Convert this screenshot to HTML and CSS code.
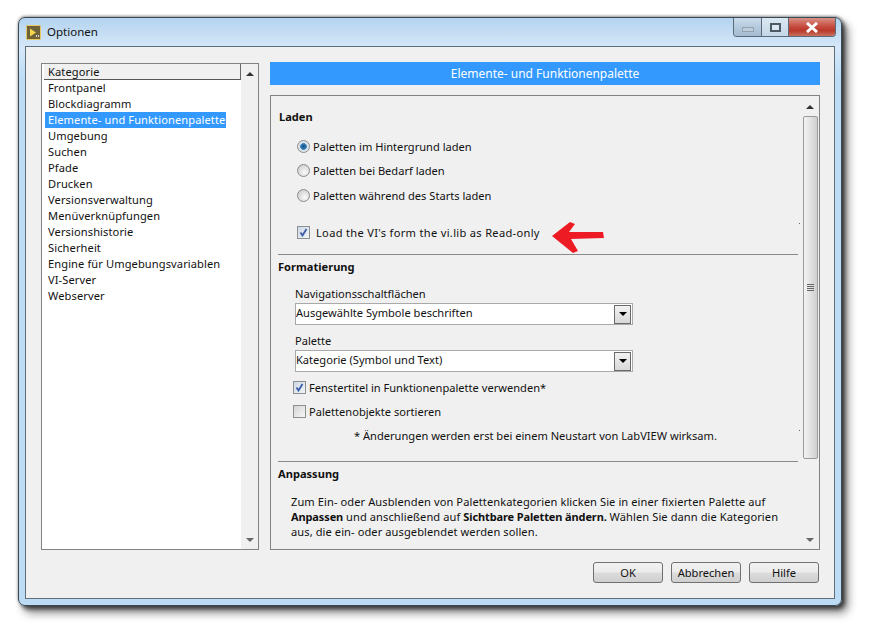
FILE: index.html
```html
<!DOCTYPE html>
<html lang="de">
<head>
<meta charset="utf-8">
<title>Optionen</title>
<link rel="stylesheet" href="styles.css">
</head>
<body>
<div class="window">
  <header class="titlebar">
    <svg class="app-icon" width="15" height="15" viewBox="0 0 15 15">
      <rect x="0.5" y="0.5" width="14" height="14" rx="1" fill="#6f6238" stroke="#e8c860"/>
      <path d="M4 3.5 L10 7.5 L4 11.5Z" fill="#f6d84e"/>
      <path d="M10 10h1v2h-1zM12 10h1v2h-1z" fill="#ddd"/>
    </svg>
    <span class="title">Optionen</span>
    <div class="controls">
      <div class="ctl ctl-min"><span class="min-glyph"></span></div>
      <div class="ctl ctl-max"><span class="max-glyph"></span></div>
      <div class="ctl ctl-close">
        <svg width="14" height="11" viewBox="0 0 14 11"><path d="M2 1 L12 10 M12 1 L2 10" stroke="#fff" stroke-width="3"/></svg>
      </div>
    </div>
  </header>
  <div class="client">
    <div class="columns">
      <aside class="listbox">
        <div class="list">
          <div class="list-head">Kategorie</div>
          <div class="list-item">Frontpanel</div>
          <div class="list-item">Blockdiagramm</div>
          <div class="list-item"><span class="selected">Elemente- und Funktionenpalette</span></div>
          <div class="list-item">Umgebung</div>
          <div class="list-item">Suchen</div>
          <div class="list-item">Pfade</div>
          <div class="list-item">Drucken</div>
          <div class="list-item">Versionsverwaltung</div>
          <div class="list-item">Menüverknüpfungen</div>
          <div class="list-item">Versionshistorie</div>
          <div class="list-item">Sicherheit</div>
          <div class="list-item">Engine für Umgebungsvariablen</div>
          <div class="list-item">VI-Server</div>
          <div class="list-item">Webserver</div>
        </div>
        <div class="scroll scroll-list">
          <span class="arrow-up"></span>
          <span class="arrow-down"></span>
        </div>
      </aside>
      <main class="main">
        <h1 class="banner">Elemente- und Funktionenpalette</h1>
        <div class="panel">
          <span class="speck speck-a"></span>
          <span class="speck speck-b"></span>
          <div class="content">
            <h2 class="sec sec-laden">Laden</h2>
            <div class="radio-row"><span class="radio on"></span>Paletten im Hintergrund laden</div>
            <div class="radio-row"><span class="radio"></span>Paletten bei Bedarf laden</div>
            <div class="radio-row"><span class="radio"></span>Paletten während des Starts laden</div>
            <div class="vi-row">
              <span class="check on"><svg width="9" height="9" viewBox="0 0 9 9"><path d="M1.5 4.5 L3.5 7.5 L7.5 1" fill="none" stroke="#3c5da8" stroke-width="1.8"/></svg></span>
              <span class="vi-label">Load the VI's form the vi.lib as Read-only</span>
              <svg class="red-arrow" width="53" height="33" viewBox="0 0 53 33"><path d="M0 15 L18 1 L23 3 L17 11 L51 11 L52 17 L19 18 L26 30 L21 32Z" fill="#ed1c24"/></svg>
            </div>
            <hr class="rule">
            <h2 class="sec">Formatierung</h2>
            <label class="field-label field-first">Navigationsschaltflächen</label>
            <div class="select"><span class="select-text">Ausgewählte Symbole beschriften</span><span class="drop"><span class="drop-tri"></span></span></div>
            <label class="field-label field-second">Palette</label>
            <div class="select"><span class="select-text">Kategorie (Symbol und Text)</span><span class="drop"><span class="drop-tri"></span></span></div>
            <div class="check-row check-first">
              <span class="check on"><svg width="9" height="9" viewBox="0 0 9 9"><path d="M1.5 4.5 L3.5 7.5 L7.5 1" fill="none" stroke="#3c5da8" stroke-width="1.8"/></svg></span>Fenstertitel in Funktionenpalette verwenden*
            </div>
            <div class="check-row"><span class="check"></span>Palettenobjekte sortieren</div>
            <p class="note">* Änderungen werden erst bei einem Neustart von LabVIEW wirksam.</p>
            <hr class="rule rule-second">
            <h2 class="sec">Anpassung</h2>
            <p class="para">Zum Ein- oder Ausblenden von Palettenkategorien klicken Sie in einer fixierten Palette auf <b>Anpassen</b> und anschließend auf <b>Sichtbare Paletten ändern.</b> Wählen Sie dann die Kategorien aus, die ein- oder ausgeblendet werden sollen.</p>
          </div>
          <div class="scroll scroll-panel">
            <span class="arrow-up"></span>
            <div class="thumb"><span class="grip"></span></div>
            <span class="arrow-down"></span>
          </div>
        </div>
        <footer class="buttons">
          <button class="btn">OK</button>
          <button class="btn">Abbrechen</button>
          <button class="btn">Hilfe</button>
        </footer>
      </main>
    </div>
  </div>
</div>
</body>
</html>
```
FILE: styles.css
```css
* { box-sizing: border-box; }
html, body { margin: 0; padding: 0; background: #fff; }
body {
  width: 871px;
  height: 628px;
  overflow: hidden;
  padding: 17px 0 0 18px;
  font-family: "Noto Sans", "DejaVu Sans", sans-serif;
  font-size: 11.1px;
  color: #111;
}
.window {
  width: 824px;
  height: 589px;
  border: 1px solid #3a4a56;
  border-radius: 7px;
  background: linear-gradient(180deg, #b4d3ef 0, #d6e8f8 30px, #bcdcf6 60px, #bcdcf6 100%);
  box-shadow: 0 -1px 3px rgba(0,0,0,.4), 3px 3px 4px rgba(0,0,0,.6), 6px 7px 10px rgba(0,0,0,.45);
  display: flex;
  flex-direction: column;
}
.titlebar {
  height: 28px;
  flex: none;
  display: flex;
  align-items: flex-start;
  padding-left: 7px;
}
.app-icon { margin-top: 7px; }
.title { margin: 6px 0 0 6px; font-size: 11.5px; line-height: 16px; color: #111; }
.controls {
  margin-left: auto;
  margin-right: 5px;
  display: flex;
  height: 19px;
  border: 1px solid #5a6a78;
  border-top: 0;
  border-radius: 0 0 4px 4px;
  overflow: hidden;
}
.ctl { display: flex; align-items: center; justify-content: center; }
.ctl-min { width: 28px; background: linear-gradient(180deg, #c9dbeb, #a3bad0); border-right: 1px solid #5a6a78; }
.ctl-max { width: 27px; background: linear-gradient(180deg, #dbe8f3, #c4d6e6); border-right: 1px solid #5a6a78; }
.ctl-close { width: 46px; background: linear-gradient(180deg, #d99287 0, #c4483a 50%, #b93a2c 70%, #c9705f 100%); }
.min-glyph { width: 12px; height: 5px; margin-top: 4px; background: #bfccd9; border: 1px solid #92a3b3; }
.max-glyph { width: 11px; height: 9px; border: 2px solid #4d5964; background: #dbe8f3; }
.client {
  margin: 0 6px 6px;
  flex: 1;
  background: #f0f0f0;
  border: 1px solid #5f6f7c;
  padding: 16px 15px 0;
}
.columns { display: flex; gap: 11px; }
.listbox {
  width: 218px;
  height: 487px;
  border: 1px solid #828282;
  background: #fff;
  display: flex;
  flex: none;
}
.list { flex: 1; padding: 0 0 0 2px; min-width: 0; letter-spacing: .1px; }
.list-head {
  height: 16px;
  line-height: 15px;
  padding-left: 4px;
  background: #f0f0f0;
  border-right: 1px solid #666;
  border-bottom: 1px solid #555;
}
.list-item { height: 16px; line-height: 16px; padding-left: 4px; }
.selected {
  display: block;
  width: 181px;
  margin-left: -3px;
  padding-left: 3px;
  background: #3399ff;
  color: #fff;
  white-space: nowrap;
}
.scroll {
  flex: none;
  width: 17px;
  background: #f0f0f0;
  display: flex;
  flex-direction: column;
  align-items: center;
  padding: 8px 0 7px;
}
.arrow-up { width: 0; height: 0; border: 4px solid transparent; border-top: 0; border-bottom: 4px solid #333; flex: none; }
.arrow-down { width: 0; height: 0; border: 4px solid transparent; border-bottom: 0; border-top: 4px solid #666; margin-top: auto; flex: none; }
.main { width: 550px; flex: none; }
.banner {
  margin: -1px 0 10px;
  height: 23px;
  background: #3399ff;
  color: #fff;
  font-weight: 400;
  font-size: 12px;
  line-height: 23px;
  text-align: center;
}
.panel {
  height: 455px;
  border: 1px solid #828282;
  display: flex;
  overflow: hidden;
  position: relative;
}
.speck { position: absolute; left: 528px; width: 1px; height: 1px; background: #666; }
.speck-a { top: 127px; }
.speck-b { top: 334px; }
.content { flex: 1; min-width: 0; padding: 13px 0 0 7px; }
.sec { margin: 0; font-size: 11.1px; font-weight: 700; line-height: 16px; }
.sec-laden { margin: 0 0 13px 1px; }
.radio-row { display: flex; align-items: center; height: 16px; margin: 0 0 8.5px 19px; white-space: nowrap; }
.radio {
  width: 13px; height: 13px;
  border-radius: 50%;
  border: 1px solid #8b8b8b;
  background: radial-gradient(circle at 62% 66%, #fafafa, #c4c4c4);
  margin-right: 3px;
  flex: none;
}
.radio.on { background: radial-gradient(circle, #1c4f80 0, #2d7ab4 33%, #4c90c0 40%, #d8dfe6 47%, #eef2f6 100%); }
.check {
  width: 13px; height: 13px;
  border: 1px solid #8e8f8f;
  background: linear-gradient(135deg, #d4d4d4, #f6f6f6);
  display: inline-flex;
  align-items: center;
  justify-content: center;
  flex: none;
  margin-right: 3px;
}
.check.on { background: linear-gradient(135deg, #cdd8e6, #f2f5f9); }
.vi-row { display: flex; align-items: center; height: 16px; margin: 21px 0 0 19px; white-space: nowrap; }
.vi-label { margin-left: 3px; letter-spacing: .31px; }
.red-arrow { margin: 10px 0 0 12px; flex: none; }
.rule { border: 0; height: 1px; background: #8a8a8a; margin: 14px 3px 4px 0; }
.rule-second { margin-top: 17px; }
.field-label { display: block; line-height: 16px; margin-left: 17px; }
.field-first { margin-top: 11px; }
.field-second { margin-top: 8px; }
.select {
  width: 338px;
  height: 22px;
  margin: 1px 0 0 17px;
  border: 1px solid #a9a9a9;
  background: #fff;
  display: flex;
  align-items: center;
  justify-content: space-between;
}
.select-text { padding-bottom: 4px; }
.drop {
  width: 17px; height: 19px;
  margin-right: 1px;
  border: 1px solid #6a6a6a;
  background: linear-gradient(180deg, #f2f2f2, #d8d8d8);
  display: flex;
  align-items: center;
  justify-content: center;
}
.drop-tri { width: 0; height: 0; border: 4px solid transparent; border-bottom: 0; border-top: 4px solid #000; }
.check-row { display: flex; align-items: center; height: 16px; margin: 8px 0 0 15px; white-space: nowrap; }
.check-first { margin-top: 7px; }
.note { margin: 9px 0 0 76px; line-height: 16px; white-space: nowrap; }
.para { margin: 12px 0 0 13px; line-height: 15px; width: 500px; letter-spacing: .08px; }
.para b { font-size: 11px; letter-spacing: -.12px; }
.scroll-panel { width: 18px; padding-top: 9px; }
.thumb {
  width: 15px;
  height: 343px;
  margin-top: 7px;
  border: 1px solid #9a9a9a;
  border-radius: 2px;
  background: linear-gradient(90deg, #f4f4f4, #cfcfcf);
  display: flex;
  align-items: center;
  justify-content: center;
  flex: none;
}
.grip {
  width: 7px; height: 7px;
  background: repeating-linear-gradient(180deg, #666 0 1px, transparent 1px 2px);
}
.buttons { display: flex; justify-content: flex-end; gap: 8px; margin: 12px 1px 0 0; }
.btn {
  width: 70px;
  height: 21px;
  padding: 0;
  border: 1px solid #707070;
  border-radius: 3px;
  background: linear-gradient(180deg, #f2f2f2 0, #ebebeb 48%, #dcdcdc 52%, #cfcfcf 100%);
  font: inherit;
  color: #111;
}
```
